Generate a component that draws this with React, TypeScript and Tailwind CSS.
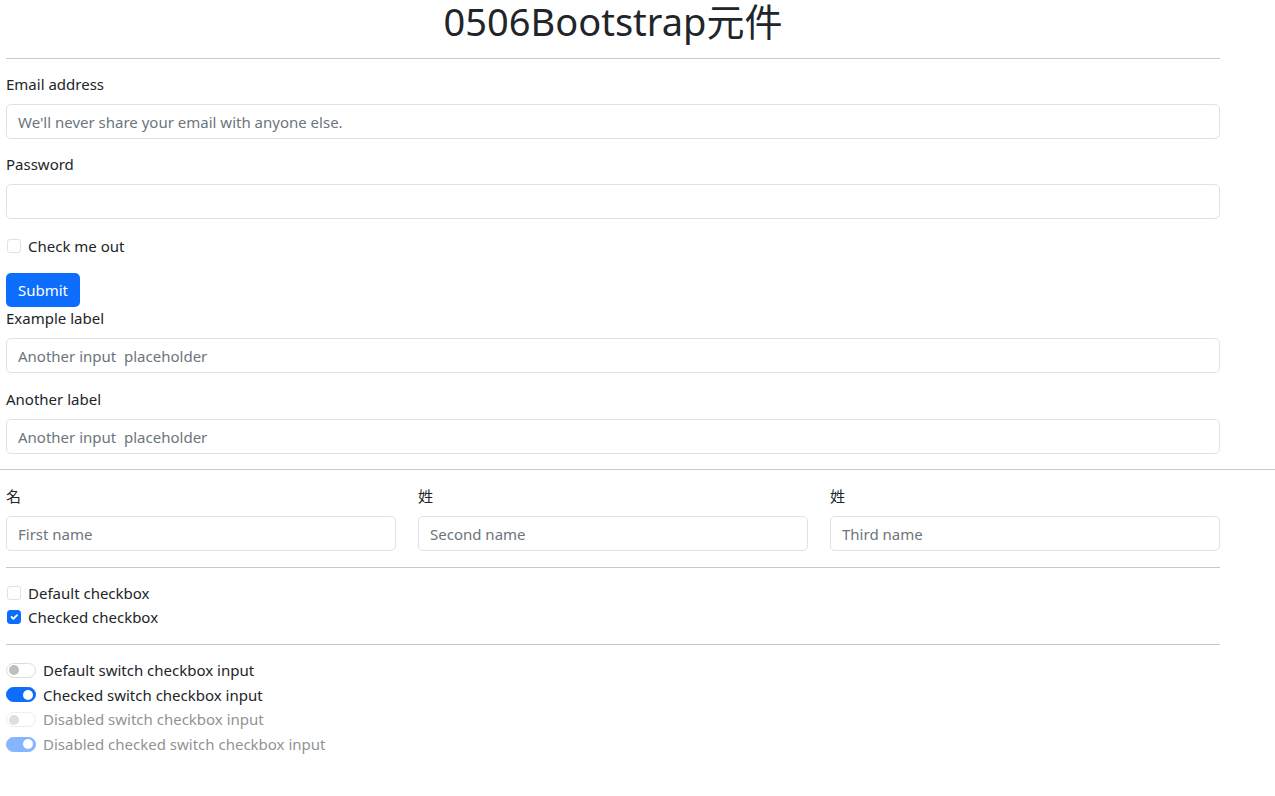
import React from 'react';

const font = { fontFamily: '"Noto Sans", "Noto Sans CJK TC", sans-serif' };

function Field({ label, placeholder, type = 'text' }: { label: string; placeholder?: string; type?: string }) {
  return (
    <div>
      <label className="mb-[9px] block h-[22px] text-[15px] leading-[22px] text-[#212529]">{label}</label>
      <input
        type={type}
        placeholder={placeholder}
        className="block h-[35px] w-full rounded-[5px] border border-[#dee2e6] bg-white px-[11px] text-[15px] text-[#212529] outline-none placeholder:text-[#6c757d]"
      />
    </div>
  );
}

function Check({ label, checked = false }: { label: string; checked?: boolean }) {
  return (
    <div className="flex h-[24px] items-center">
      <span
        className={
          checked
            ? 'ml-[1px] flex h-[14px] w-[14px] items-center justify-center rounded-[3px] border border-[#0d6efd] bg-[#0d6efd]'
            : 'ml-[1px] h-[14px] w-[14px] rounded-[3px] border border-[#dee2e6] bg-white'
        }
      >
        {checked && (
          <svg viewBox="0 0 20 20" className="h-[12px] w-[12px]">
            <path d="M6 10l3 3 6-6" fill="none" stroke="#fff" strokeWidth="3" strokeLinecap="round" strokeLinejoin="round" />
          </svg>
        )}
      </span>
      <span className="ml-[7px] text-[15px] text-[#212529]">{label}</span>
    </div>
  );
}

function Switch({ label, checked = false, disabled = false }: { label: string; checked?: boolean; disabled?: boolean }) {
  return (
    <div className={disabled ? 'flex h-[24.67px] items-center opacity-50' : 'flex h-[24.67px] items-center'}>
      <span
        className={
          checked
            ? 'flex h-[15px] w-[30px] items-center justify-end rounded-full border border-[#0d6efd] bg-[#0d6efd] px-[2px]'
            : 'flex h-[15px] w-[30px] items-center justify-start rounded-full border border-[#dcdcdc] bg-white px-[2px]'
        }
      >
        <span className={checked ? 'h-[10px] w-[10px] rounded-full bg-white' : 'h-[10px] w-[10px] rounded-full bg-[#bfbfbf]'} />
      </span>
      <span className="ml-[7px] text-[15px] text-[#212529]">{label}</span>
    </div>
  );
}

function Divider() {
  return <hr className="border-0 border-t border-[#c8c9ca]" />;
}

export default function App() {
  return (
    <div className="min-h-[796px] bg-white" style={font}>
      <div className="w-[1226px] px-[6px]">
        <h1 className="-mt-[5px] text-center text-[38px] font-normal leading-[52px] text-[#212529]">0506Bootstrap元件</h1>
        <div className="mt-[11px]">
          <Divider />
        </div>
        <form className="pt-[14px]">
          <Field label="Email address" placeholder="We'll never share your email with anyone else." type="email" />
          <div className="mt-[14px]">
            <Field label="Password" type="password" />
          </div>
          <div className="mt-[15px]">
            <Check label="Check me out" />
          </div>
          <button
            type="button"
            className="mt-[15px] block h-[34px] w-[74px] rounded-[5px] bg-[#0d6efd] text-[15px] text-white"
          >
            Submit
          </button>
          <Field label="Example label" placeholder="Another input  placeholder" />
          <div className="mt-[15px]">
            <Field label="Another label" placeholder="Another input  placeholder" />
          </div>
        </form>
      </div>
      <div className="mt-[15px]">
        <Divider />
      </div>
      <div className="w-[1226px] px-[6px]">
        <div className="mt-[15px] grid grid-cols-3 gap-[22px]">
          <Field label="名" placeholder="First name" />
          <Field label="姓" placeholder="Second name" />
          <Field label="姓" placeholder="Third name" />
        </div>
        <div className="mt-[16px]">
          <Divider />
        </div>
        <div className="mt-[13px]">
          <Check label="Default checkbox" />
          <Check label="Checked checkbox" checked />
        </div>
        <div className="mt-[15px]">
          <Divider />
        </div>
        <div className="mt-[13px]">
          <Switch label="Default switch checkbox input" />
          <Switch label="Checked switch checkbox input" checked />
          <Switch label="Disabled switch checkbox input" disabled />
          <Switch label="Disabled checked switch checkbox input" checked disabled />
        </div>
      </div>
    </div>
  );
}
